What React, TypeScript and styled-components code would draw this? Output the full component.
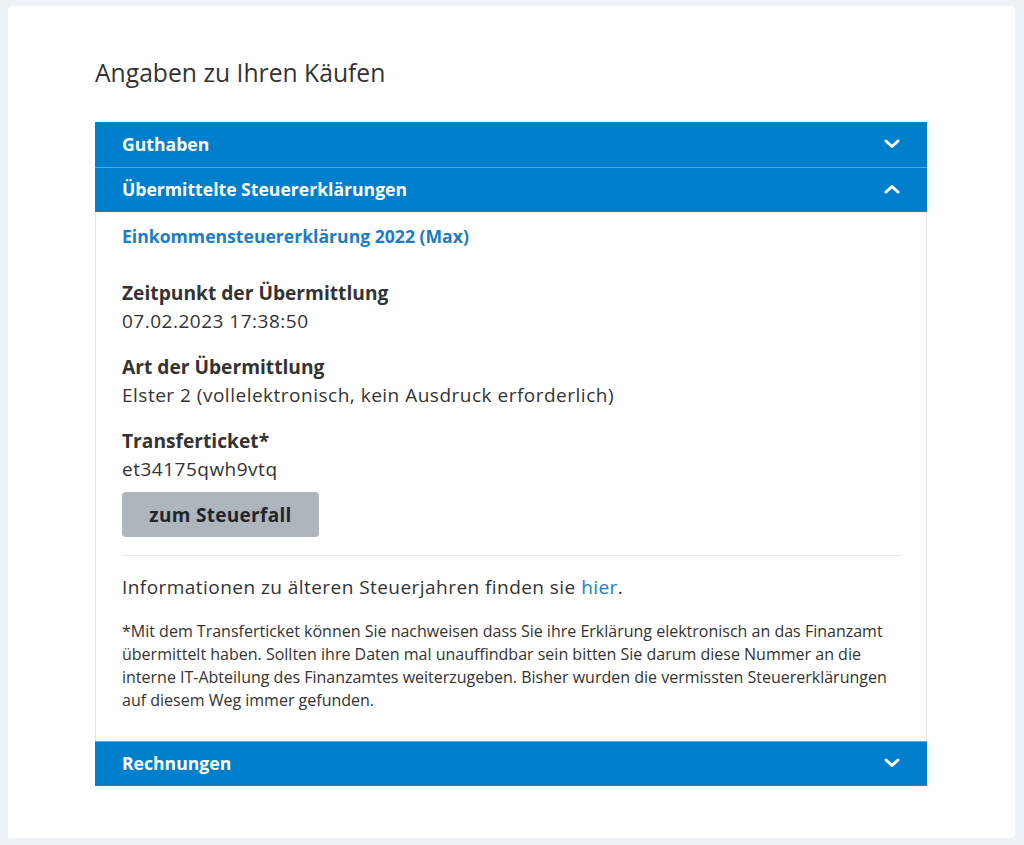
import React from "react";
import styled, { createGlobalStyle } from "styled-components";

const Global = createGlobalStyle`
  html, body { margin: 0; padding: 0; background: #eef1f5; }
  body { font-family: "Open Sans", "Noto Sans", sans-serif; color: #333; }
`;

const Page = styled.div`
  padding: 6px 9px 7px 8px;
  min-height: 845px;
  box-sizing: border-box;
`;

const Card = styled.main`
  background: #fff;
  border-radius: 4px;
  min-height: 832px;
  box-sizing: border-box;
  padding: 52px 88px 40px 87px;
`;

const Title = styled.h1`
  margin: 0 0 34px;
  font-size: 24.7px;
  font-weight: 400;
  line-height: 30px;
  color: #333;
`;

const Accordion = styled.section`
  display: flex;
  flex-direction: column;
`;

const Header = styled.button<{ $first?: boolean }>`
  display: flex;
  align-items: center;
  justify-content: space-between;
  height: 44px;
  padding: 0 27px 2px;
  border: none;
  border-top: 1px solid ${(p) => (p.$first ? "#0080cc" : "#5aa9dc")};
  background: #0080cc;
  color: #fff;
  font-family: inherit;
  font-size: 17.6px;
  font-weight: 700;
  text-align: left;
  cursor: pointer;
  box-sizing: border-box;
  height: 45px;
`;

const Body = styled.div`
  border-left: 1px solid #e3e6e9;
  border-right: 1px solid #e3e6e9;
  padding: 12px 26px 29px;
`;

const Link = styled.a`
  display: block;
  color: #1a7dc6;
  font-weight: 700;
  font-size: 17.6px;
  line-height: 24px;
  text-decoration: none;
  margin-bottom: 31px;
`;

const Field = styled.div`
  margin-bottom: 18px;
  &:last-of-type { margin-bottom: 9px; }
`;

const Label = styled.div`
  font-size: 19.2px;
  font-weight: 700;
  line-height: 28px;
  color: #333;
`;

const Value = styled.div`
  font-size: 19px;
  letter-spacing: 0.5px;
  line-height: 28px;
  color: #333;
`;

const Button = styled.button`
  display: block;
  width: 197px;
  height: 45px;
  border: none;
  border-radius: 4px;
  background: #adb5bd;
  color: #212529;
  font-family: inherit;
  font-size: 19px;
  letter-spacing: 0.3px;
  font-weight: 700;
`;

const Divider = styled.hr`
  border: none;
  border-top: 1px solid #e9ecef;
  margin: 18px 0 17px;
`;

const Info = styled.p`
  margin: 0 0 19px;
  font-size: 19px;
  letter-spacing: 0.45px;
  line-height: 28px;
  color: #333;
  a { color: #1a7dc6; text-decoration: none; }
`;

const Note = styled.p`
  margin: 0;
  font-size: 16px;
  line-height: 23px;
  color: #333;
`;

const Chevron = ({ up }: { up?: boolean }) => (
  <svg width="16" height="10" viewBox="0 0 16 10" aria-hidden>
    <path
      d={up ? "M2 8 L8 2.5 L14 8" : "M2 2 L8 7.5 L14 2"}
      fill="none"
      stroke="#fff"
      strokeWidth="3"
      strokeLinecap="round"
      strokeLinejoin="round"
    />
  </svg>
);

export default function App() {
  return (
    <>
      <Global />
      <Page>
        <Card>
          <Title>Angaben zu Ihren Käufen</Title>
          <Accordion>
            <Header $first>
              Guthaben
              <Chevron />
            </Header>
            <Header>
              Übermittelte Steuererklärungen
              <Chevron up />
            </Header>
            <Body>
              <Link href="#">Einkommensteuererklärung 2022 (Max)</Link>
              <Field>
                <Label>Zeitpunkt der Übermittlung</Label>
                <Value>07.02.2023 17:38:50</Value>
              </Field>
              <Field>
                <Label>Art der Übermittlung</Label>
                <Value>Elster 2 (vollelektronisch, kein Ausdruck erforderlich)</Value>
              </Field>
              <Field>
                <Label>Transferticket*</Label>
                <Value>et34175qwh9vtq</Value>
              </Field>
              <Button>zum Steuerfall</Button>
              <Divider />
              <Info>
                Informationen zu älteren Steuerjahren finden sie <a href="#">hier</a>.
              </Info>
              <Note>
                *Mit dem Transferticket können Sie nachweisen dass Sie ihre Erklärung elektronisch an das Finanzamt
                <br />
                übermittelt haben. Sollten ihre Daten mal unauffindbar sein bitten Sie darum diese Nummer an die
                <br />
                interne IT-Abteilung des Finanzamtes weiterzugeben. Bisher wurden die vermissten Steuererklärungen
                <br />
                auf diesem Weg immer gefunden.
              </Note>
            </Body>
            <Header>
              Rechnungen
              <Chevron />
            </Header>
          </Accordion>
        </Card>
      </Page>
    </>
  );
}
